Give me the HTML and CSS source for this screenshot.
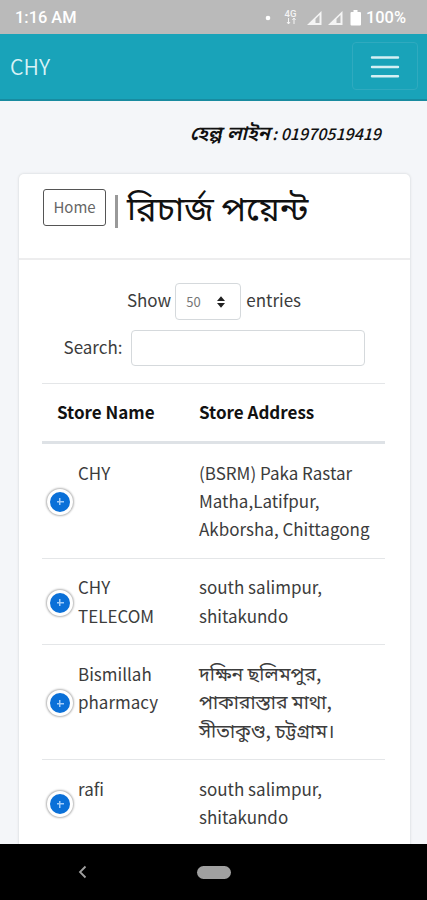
FILE: index.html
```html
<!DOCTYPE html>
<html lang="bn">
<head>
<meta charset="utf-8">
<meta name="viewport" content="width=device-width, initial-scale=1">
<title>CHY</title>
<link rel="stylesheet" href="styles.css">
</head>
<body>
<div class="status">
  <span class="clock">1:16 AM</span>
  <svg class="status-icons" width="97" height="18" viewBox="0 0 97 18" fill="none">
    <circle cx="3" cy="9" r="2.3" fill="#fff"/>
    <text x="19.500" y="7.500" class="net">4G</text>
    <path d="M23.500 9v6M22 13l1.500 2 1.500-2M29 15V9M27.500 11l1.500-2 1.500 2" stroke="#f4f4f4" stroke-width="1"/>
    <path d="M42 16L56.500 2V16Z" fill="#f4f4f4"/><path d="M50.500 14V10l4-4v8Z" fill="#bababa"/>
    <path d="M63 16L77.500 2V16Z" fill="#f4f4f4"/><path d="M71.500 14V10l4-4v8Z" fill="#bababa"/>
    <path d="M88.500 1h4v2H95q1 0 1 1v11.500q0 1-1 1h-8.500q-1 0-1-1V4q0-1 1-1h2Z" fill="#fff"/>
  </svg>
  <span class="charge">100%</span>
</div>
<nav class="navbar">
  <span class="brand">CHY</span>
  <button class="toggler" aria-label="Menu">
    <svg width="30" height="24" viewBox="0 0 30 24" stroke="#d5f0f4" stroke-width="2.400" stroke-linecap="round"><path d="M2 3.500h26M2 13h26M2 22.200h26"/></svg>
  </button>
</nav>
<main class="page">
  <p class="helpline"><b>হেল্প লাইন</b><span> : 01970519419</span></p>
  <section class="card">
    <header class="card-head">
      <a class="home">Home</a><span class="bar"></span><h1>রিচার্জ পয়েন্ট</h1>
    </header>
    <div class="card-body">
      <div class="length">
        <span>Show</span>
        <span class="select"><span>50</span>
          <svg width="8" height="12" viewBox="0 0 8 12" fill="#222"><path d="M4 .3L8 5H0ZM4 11.700L8 7H0Z"/></svg>
        </span>
        <span>entries</span>
      </div>
      <div class="search"><span>Search:</span><input type="text" aria-label="Search"></div>
      <div class="table">
        <div class="row head"><div class="name">Store Name</div><div class="address">Store Address</div></div>
        <div class="row"><i class="plus"></i><div class="name">CHY</div><div class="address">(BSRM) Paka Rastar<br>Matha,Latifpur,<br>Akborsha, Chittagong</div></div>
        <div class="row"><i class="plus"></i><div class="name">CHY<br>TELECOM</div><div class="address">south salimpur,<br>shitakundo</div></div>
        <div class="row"><i class="plus"></i><div class="name">Bismillah<br>pharmacy</div><div class="address bn">দক্ষিন ছলিমপুর,<br>পাকারাস্তার মাথা,<br>সীতাকুণ্ড, চট্টগ্রাম।</div></div>
        <div class="row"><i class="plus"></i><div class="name">rafi</div><div class="address">south salimpur,<br>shitakundo</div></div>
      </div>
    </div>
  </section>
</main>
<footer class="sysnav">
  <svg width="10" height="14" viewBox="0 0 10 14" fill="none" stroke="#a0a0a0" stroke-width="1.800"><path d="M7.500 1.500L2 7l5.500 5.500"/></svg>
  <span class="pill"></span>
</footer>
</body>
</html>
```
FILE: styles.css
```css
* { box-sizing: border-box; }
body {
  margin: 0;
  height: 900px;
  display: flex;
  flex-direction: column;
  overflow: hidden;
  background: #f4f6f9;
  color: #3c3c3c;
  font-family: "Noto Sans CJK SC", "Noto Sans Bengali", sans-serif;
  font-size: 17px;
  line-height: 28.4px;
}
.status {
  flex: none;
  height: 34px;
  display: flex;
  align-items: center;
  padding: 2px 21px 0 15px;
  background: #bababa;
  color: #fff;
  font: 500 16.4px/20px Roboto, sans-serif;
}
.status-icons { margin-left: auto; }
.charge { margin-left: 4px; }
.net { font: 500 9.500px Roboto, sans-serif; fill: #f4f4f4; }
.navbar {
  flex: none;
  height: 67px;
  display: flex;
  align-items: center;
  justify-content: space-between;
  padding: 0 9px 1px 10px;
  background: #19a3b9;
  border-bottom: 2px solid #188ba0;
}
.brand { padding-top: 1px; color: #d8f2f6; font-size: 21.3px; font-weight: 350; }
.toggler {
  width: 66px;
  height: 48px;
  display: grid;
  place-items: center;
  padding: 0;
  background: none;
  border: 1px solid #2faabf;
  border-radius: 4px;
}
.page { flex: 1; min-height: 0; overflow: hidden; padding: 18px 17px 0 19px; }
.helpline {
  display: flex;
  justify-content: flex-end;
  align-items: baseline;
  margin: 0 29px 27px 0;
  height: 28px;
  color: #111;
  font-size: 16px;
  font-style: italic;
  font-weight: 500;
  line-height: 25px;
  white-space: pre;
}
.helpline b { margin-right: -1px; font-size: 19.6px; font-weight: 600; word-spacing: 1px; }
.card {
  height: 700px;
  background: #fff;
  border-radius: 5px;
  box-shadow: 0 0 2px 1px #e2e4e7;
}
.card-head {
  height: 86px;
  display: flex;
  align-items: flex-start;
  padding: 15px 24px 0;
  border-bottom: 2px solid #ededee;
}
.home {
  width: 63px;
  height: 37px;
  border: 1px solid #555;
  border-radius: 3px;
  color: #666;
  font-size: 15px;
  line-height: 34px;
  text-align: center;
}
.bar { width: 3px; height: 33px; margin: 6px 9px 0 9px; background: #999; }
h1 { margin: 0; color: #111; font-size: 34.3px; font-weight: 400; line-height: 34px; white-space: nowrap; }
.card-body { padding: 23px 25px 0 23px; }
.length, .search { display: flex; align-items: center; justify-content: center; }
.length { gap: 5px; height: 37px; padding-left: 1px; line-height: 26px; }
.length > span:not(.select) { padding-bottom: 4px; }
.select {
  width: 66px;
  height: 37px;
  display: flex;
  align-items: center;
  justify-content: space-between;
  margin-left: -1px;
  padding: 0 15px 0 10px;
  border: 1px solid #d5d9dc;
  border-radius: 4px;
  color: #777;
  font-size: 13px;
}
.search { gap: 9px; margin-top: 10px; padding-left: 2px; height: 36px; }
.search span { padding-bottom: 1px; }
.search input { width: 234px; height: 36px; border: 1px solid #d5d9dc; border-radius: 4px; background: #fff; }
.table { margin-top: 17px; }
.row {
  position: relative;
  display: grid;
  grid-template-columns: 157px 1fr;
  padding: 14.5px 0 14.2px;
  border-top: 1.5px solid #e4e6e8;
  white-space: nowrap;
}
.row .name { padding-left: 36px; }
.row.head { padding-top: 14px; border-bottom: 3px solid #dee2e6; color: #111; font-weight: 700; height: 61px; }
.row.head .name { padding-left: 15px; }
.row.head + .row { border-top: 0; }
.address.bn { margin-top: -1px; margin-bottom: 1px; font-size: 19.4px; }
.plus {
  position: absolute;
  left: 5px;
  top: 50%;
  width: 26px;
  height: 26px;
  margin-top: -12px;
  border: 3.5px solid #fff;
  border-radius: 50%;
  background:
    linear-gradient(#a0ccfa, #a0ccfa) center / 7px 1.5px no-repeat,
    linear-gradient(#a0ccfa, #a0ccfa) center / 1.5px 7px no-repeat,
    #0a70d8;
  box-shadow: 0 0 2px 1px #b4b4b4;
}
.sysnav {
  flex: none;
  height: 56px;
  display: flex;
  align-items: center;
  padding-left: 78px;
  background: #000;
}
.pill { width: 34px; height: 13px; margin-left: 109px; border-radius: 7px; background: #a0a0a0; }
```
